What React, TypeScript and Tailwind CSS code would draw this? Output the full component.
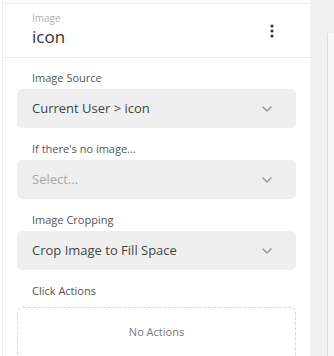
import React from "react";

function Chevron() {
  return (
    <svg width="14" height="14" viewBox="0 0 14 14" fill="none" stroke="#9a9a9a" strokeWidth="1.6" strokeLinecap="round" strokeLinejoin="round">
      <path d="M3 5l4 4 4-4" />
    </svg>
  );
}

function Field({ label, value, placeholder }: { label: string; value: string; placeholder?: boolean }) {
  return (
    <div className="flex flex-col shrink-0">
      <div className="pl-[29px] text-[11px] leading-[14px] text-[#555] mb-[4px]">{label}</div>
      <div className="mx-[14px] h-[39px] rounded-[5px] bg-[#efefef] flex items-center justify-between pl-[15px] pr-[22px]">
        <span className={`text-[13px] ${placeholder ? "text-[#a8a8a8]" : "text-[#444]"}`}>{value}</span>
        <Chevron />
      </div>
    </div>
  );
}

export default function App() {
  return (
    <div className="w-[334px] h-[356px] overflow-hidden bg-white flex" style={{ fontFamily: '"Open Sans", sans-serif' }}>
      <div className="w-[2px] bg-white shrink-0" />
      <div className="w-[308px] shrink-0 border-l border-[#ececec] flex flex-col pt-[3px]">
        <div className="shrink-0 border-t border-b border-[#ececec] h-[55px] flex items-center justify-between pl-[29px] pr-[36px]">
          <div className="flex flex-col gap-[3px] -mt-[2px]">
            <span className="text-[10px] leading-[12px] text-[#b0b0b0]">Image</span>
            <span className="text-[17px] leading-[20px] text-[#333]">icon</span>
          </div>
          <svg width="4" height="14" viewBox="0 0 4 14" fill="#333">
            <circle cx="2" cy="2" r="1.6" />
            <circle cx="2" cy="7" r="1.6" />
            <circle cx="2" cy="12" r="1.6" />
          </svg>
        </div>
        <div className="flex flex-col gap-[14px] pt-[13px] shrink-0">
          <Field label="Image Source" value="Current User > icon" />
          <Field label="If there's no image..." value="Select..." placeholder />
          <Field label="Image Cropping" value="Crop Image to Fill Space" />
          <div className="flex flex-col shrink-0">
            <div className="pl-[29px] text-[11px] leading-[14px] text-[#555] mb-[9px]">Click Actions</div>
            <div className="mx-[14px] h-[60px] rounded-[6px] border border-dashed border-[#d6d6d6] flex justify-center pt-[17px]">
              <span className="text-[11px] leading-[14px] text-[#777]">No Actions</span>
            </div>
          </div>
        </div>
      </div>
      <div className="w-[17px] shrink-0 bg-[#f0f0f0]" />
      <div className="flex-1 flex flex-col bg-[#f0f0f0]">
        <div className="h-[33px] shrink-0" />
        <div className="flex-1 border-l border-[#dcdcdc] bg-[#f7f7f7]" />
      </div>
    </div>
  );
}
